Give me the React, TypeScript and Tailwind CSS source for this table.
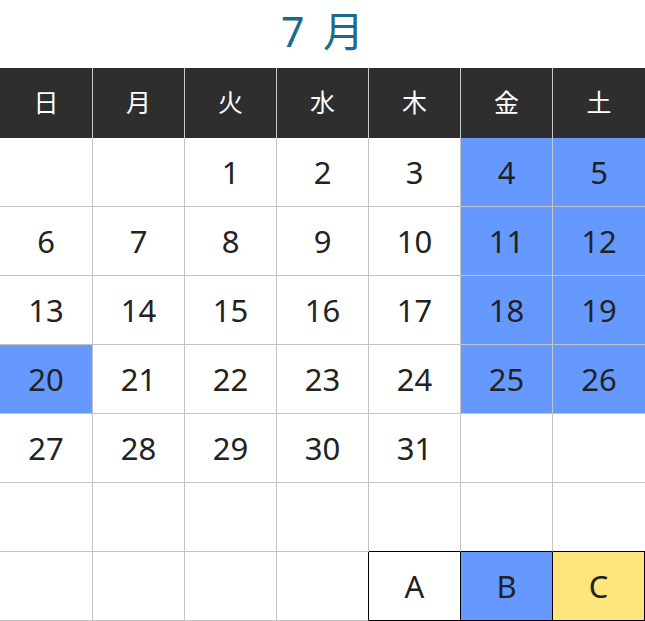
import React from "react";

const days = ["日", "月", "火", "水", "木", "金", "土"];

const blue = new Set(["4", "5", "11", "12", "18", "19", "20", "25", "26"]);

const raw: string[][] = [
  ["", "", "1", "2", "3", "4", "5"],
  ["6", "7", "8", "9", "10", "11", "12"],
  ["13", "14", "15", "16", "17", "18", "19"],
  ["20", "21", "22", "23", "24", "25", "26"],
  ["27", "28", "29", "30", "31", "", ""],
  ["", "", "", "", "", "", ""],
  ["", "", "", "", "A", "B", "C"],
];

const font = { fontFamily: '"Noto Sans", "Noto Sans CJK JP", sans-serif' };

export default function App() {
  return (
    <div className="w-[645px] h-[621px] bg-white overflow-hidden" style={font}>
      <div className="h-[68px] flex items-center justify-center pb-[5px]">
        <span className="text-[41px] leading-none text-[#1b6a8c] [word-spacing:8px]">7 月</span>
      </div>
      <div className="grid grid-cols-[93px_92px_92px_92px_92px_92px_92px]">
        {days.map((d, i) => (
          <div
            key={d}
            className={
              "h-[70px] bg-[#2e2e2e] text-white text-[25px] flex items-center justify-center " +
              (i < 6 ? "border-r border-[#c8c8c8]" : "")
            }
          >
            {d}
          </div>
        ))}
        {raw.map((row, r) =>
          row.map((t, c) => {
            const isLegend = r === 6 && c >= 4;
            let bg = "bg-white";
            if (blue.has(t) || (isLegend && t === "B")) bg = "bg-[#6699ff]";
            if (isLegend && t === "C") bg = "bg-[#ffe57c]";
            const rightBlack = isLegend || (r === 6 && c === 3);
            const bottomBlack = isLegend || (r === 5 && c >= 4);
            const rb = c < 6 || isLegend
              ? rightBlack
                ? "border-r border-r-black"
                : "border-r border-r-[#c4c4c4]"
              : "";
            const bb = bottomBlack ? "border-b border-b-black" : "border-b border-b-[#c4c4c4]";
            return (
              <div
                key={r + "-" + c}
                className={
                  "h-[69px] flex items-center justify-center text-[31px] text-[#222222] " +
                  bg +
                  " " +
                  rb +
                  " " +
                  bb
                }
              >
                {t}
              </div>
            );
          })
        )}
      </div>
    </div>
  );
}
